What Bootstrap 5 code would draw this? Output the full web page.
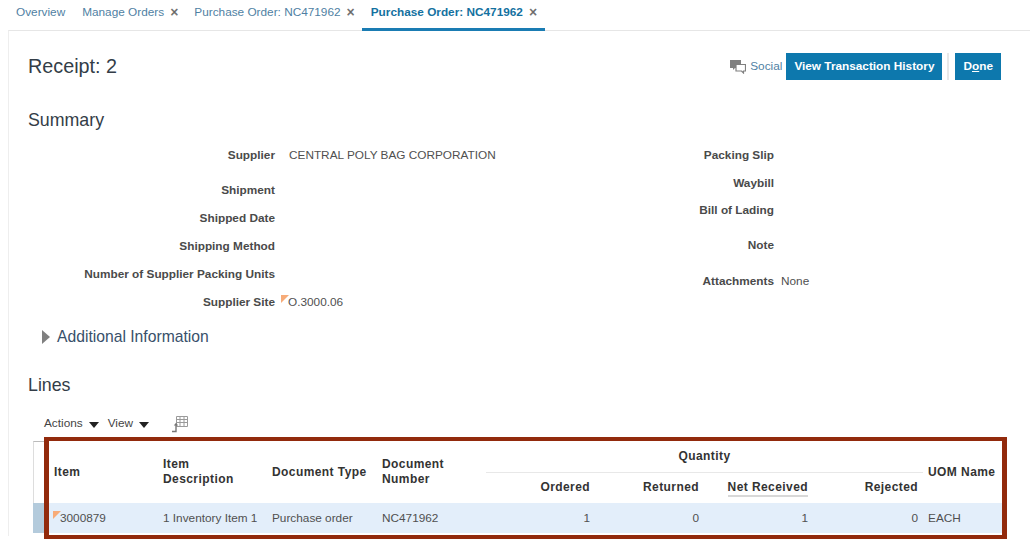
<!DOCTYPE html>
<html lang="en">
<head>
  <meta charset="UTF-8">
  <meta name="viewport" content="width=device-width, initial-scale=1.0">
  <title>Receipt: 2</title>
  <link href="https://cdn.jsdelivr.net/npm/bootstrap@5.3.0/dist/css/bootstrap.min.css" rel="stylesheet">
  <style>
    body {
      font-family: "Liberation Sans", Arial, sans-serif;
      font-size: 11.8px;
      color: #4f4f4f;
      background: #fff;
      width: 1030px;
      height: 550px;
      overflow: hidden;
    }
    .tab-strip { height: 30px; padding-left: 8px; position: relative; z-index: 1; }
    .tab-item {
      height: 31px;
      padding: 4px 8px 0;
      color: #4f7fa3;
      white-space: nowrap;
      border-bottom: 2px solid transparent;
    }
    .tab-item.first-tab { padding-right: 9px; }
    .tab-item.is-active { color: #14719f; font-weight: 700; border-bottom: 3px solid #1a7cb3; margin-left: -1px; padding-left: 9px; }
    .tab-x { color: #666; font-size: 14px; font-weight: 400; margin-left: 6px; line-height: 1; vertical-align: -1px; -webkit-text-stroke: .4px #666; }
    .page-panel {
      margin-left: 8px;
      height: 506px;
      border-top: 1px solid #e6e6e6;
      border-left: 1px solid #eee;
      padding: 0 0 0 19px;
    }
    .page-head { height: 77px; padding-right: 29px; padding-top: 22px; }
    .page-title { font-size: 19.8px; font-weight: 400; color: #333d47; margin: 0; line-height: 26px; }
    .social-link { color: #4f7fa3; margin-right: 4px; }
    .blue-btn {
      background: #0d78ad;
      color: #fff;
      font-weight: 700;
      font-size: 11.8px;
      border: 0;
      border-radius: 0;
      height: 27px;
      padding: 0 8px;
    }
    .btn-sep { width: 2px; height: 27px; background: #e8e8e8; margin: 0 6px 0 5px; }
    .section-title { font-size: 17.8px; font-weight: 400; color: #333d47; margin: 0; line-height: 24px; }
    .summary-wrap { padding-top: 10px; height: 187px; }
    .sum-col-left { width: 500px; }
    .sum-row { height: 27.7px; align-items: center; }
    .sum-col-left .sum-row { height: 27.9px; }
    .sum-row.is-tall { margin-top: 7px; }
    .sum-row.is-taller { margin-top: 8px; }
    .sum-label { font-weight: 700; color: #4a4a4a; text-align: right; flex: none; }
    .sum-col-left .sum-label { width: 247px; }
    .sum-col-right .sum-label { width: 246px; }
    .sum-value { margin-left: 14px; color: #505050; white-space: nowrap; }
    .sum-col-left .sum-value.has-flag { margin-left: 6px; }
    .sum-col-right .sum-value { margin-left: 7px; }
    .flag-tri {
      display: inline-block;
      width: 0;
      height: 0;
      border-top: 8px solid #f7ab78;
      border-right: 8px solid transparent;
      vertical-align: top;
      margin-top: 1px;
      margin-right: -1px;
    }
    .disclosure { height: 36px; padding-left: 14px; gap: 7px; font-size: 15.7px; color: #38506a; }
    .disclosure-tri { width: 0; height: 0; border-left: 8px solid #808080; border-top: 7px solid transparent; border-bottom: 7px solid transparent; }
    .lines-head { padding-top: 18px; height: 49px; }
    .tool-row { padding-left: 16px; height: 27px; color: #444; gap: 10px; margin-top: 6px; }
    .caret-dark { display: inline-block; width: 0; height: 0; border-left: 5px solid transparent; border-right: 5px solid transparent; border-top: 6px solid #222; margin-left: 6px; vertical-align: -1px; }
    .view-menu { margin-left: -1px; }
    .export-icon { margin-left: 12px; }
    .table-area { margin-left: 5px; }
    .row-gutter { width: 11px; flex: none; display: flex; flex-direction: column; padding-top: 4px; padding-bottom: 6px; }
    .gutter-top { border-top: 1px solid #bbb; border-left: 1px solid #ddd; flex: 1; }
    .gutter-sel { height: 30px; background: #b4cbdc; }
    .marked-box { width: 963px; height: 102px; border: solid #922a0c; border-width: 4px 5px; }
    .lines-table { width: 953px; table-layout: fixed; border-collapse: collapse; margin: 0; }
    .lines-table th { font-weight: 700; font-size: 12px; letter-spacing: .42px; color: #333; padding: 0 5px; vertical-align: middle; line-height: 15px; }
    .lines-table .top-row th { height: 31px; }
    .lines-table .sub-row th { height: 31px; }
    .lines-table th.qty-group { text-align: center; border-bottom: 1px solid #e8e8e8; }
    .lines-table th.num { text-align: right; }
    .lines-table td { height: 30px; background: #e3eefa; padding: 1px 5px 0; color: #505050; white-space: nowrap; }
    .lines-table td.num { text-align: right; }
    .lines-table td .flag-tri { margin-left: -1px; }
    .sorted-head { border-bottom: 2px solid #d8d8d8; padding-bottom: 1px; }
  </style>
</head>
<body>

<!-- Tabs -->
<div class="tab-strip d-flex align-items-start">
  <div class="tab-item first-tab">Overview</div>
  <div class="tab-item">Manage Orders<span class="tab-x">×</span></div>
  <div class="tab-item">Purchase Order: NC471962<span class="tab-x">×</span></div>
  <div class="tab-item is-active">Purchase Order: NC471962<span class="tab-x">×</span></div>
</div>

<div class="page-panel">
  <!-- Header -->
  <div class="page-head d-flex justify-content-between align-items-start">
    <h1 class="page-title">Receipt: 2</h1>
    <div class="d-flex align-items-center">
      <svg width="16" height="15" viewBox="0 0 16 15" class="me-1">
        <path d="M0 1h11v8H5l-2 2V9H0z" fill="#808080"/>
        <path d="M6 5.5h9.5v6.5h-2v2l-2-2H6z" fill="#fff" stroke="#808080" stroke-width="1.2"/>
      </svg>
      <span class="social-link">Social</span>
      <button class="btn blue-btn">View Transaction History</button>
      <div class="btn-sep"></div>
      <button class="btn blue-btn">D<u>o</u>ne</button>
    </div>
  </div>

  <h2 class="section-title">Summary</h2>

  <div class="summary-wrap d-flex">
    <div class="sum-col-left">
      <div class="sum-row d-flex"><div class="sum-label">Supplier</div><div class="sum-value">CENTRAL POLY BAG CORPORATION</div></div>
      <div class="sum-row is-tall d-flex"><div class="sum-label">Shipment</div></div>
      <div class="sum-row d-flex"><div class="sum-label">Shipped Date</div></div>
      <div class="sum-row d-flex"><div class="sum-label">Shipping Method</div></div>
      <div class="sum-row d-flex"><div class="sum-label">Number of Supplier Packing Units</div></div>
      <div class="sum-row d-flex"><div class="sum-label">Supplier Site</div><div class="sum-value has-flag"><span class="flag-tri"></span>O.3000.06</div></div>
    </div>
    <div class="sum-col-right">
      <div class="sum-row d-flex"><div class="sum-label">Packing Slip</div></div>
      <div class="sum-row d-flex"><div class="sum-label">Waybill</div></div>
      <div class="sum-row d-flex"><div class="sum-label">Bill of Lading</div></div>
      <div class="sum-row is-tall d-flex"><div class="sum-label">Note</div></div>
      <div class="sum-row is-taller d-flex"><div class="sum-label">Attachments</div><div class="sum-value">None</div></div>
    </div>
  </div>

  <div class="disclosure d-flex align-items-center">
    <span class="disclosure-tri"></span>
    <span>Additional Information</span>
  </div>

  <div class="lines-head"><h2 class="section-title">Lines</h2></div>

  <div class="tool-row d-flex align-items-center">
    <span>Actions<span class="caret-dark"></span></span>
    <span class="view-menu">View<span class="caret-dark"></span></span>
    <svg class="export-icon" width="18" height="18" viewBox="0 0 18 18">
      <path d="M5.5 1.5h11v10h-11zM5.5 4.5h11M5.5 7.5h11M9 1.5v10M13 1.5v10" fill="none" stroke="#9a9a9a"/>
      <path d="M1 16.5h4V9" fill="none" stroke="#777" stroke-width="1.4"/>
      <path d="M2.8 10.5L5 7.8l2.2 2.7z" fill="#777"/>
    </svg>
  </div>

  <div class="table-area d-flex">
    <div class="row-gutter"><div class="gutter-top"></div><div class="gutter-sel"></div></div>
    <div class="marked-box">
      <table class="lines-table">
        <colgroup>
          <col style="width:109px"><col style="width:109px"><col style="width:110px"><col style="width:109px">
          <col style="width:109px"><col style="width:109px"><col style="width:109px"><col style="width:110px"><col style="width:79px">
        </colgroup>
        <thead>
          <tr class="top-row">
            <th rowspan="2">Item</th>
            <th rowspan="2">Item<br>Description</th>
            <th rowspan="2">Document Type</th>
            <th rowspan="2">Document<br>Number</th>
            <th colspan="4" class="qty-group">Quantity</th>
            <th rowspan="2">UOM Name</th>
          </tr>
          <tr class="sub-row">
            <th class="num">Ordered</th>
            <th class="num">Returned</th>
            <th class="num"><span class="sorted-head">Net Received</span></th>
            <th class="num">Rejected</th>
          </tr>
        </thead>
        <tbody>
          <tr>
            <td><span class="flag-tri"></span>3000879</td>
            <td>1 Inventory Item 1</td>
            <td>Purchase order</td>
            <td>NC471962</td>
            <td class="num">1</td>
            <td class="num">0</td>
            <td class="num">1</td>
            <td class="num">0</td>
            <td>EACH</td>
          </tr>
        </tbody>
      </table>
    </div>
  </div>
</div>

<script src="https://cdn.jsdelivr.net/npm/bootstrap@5.3.0/dist/js/bootstrap.bundle.min.js"></script>
</body>
</html>
